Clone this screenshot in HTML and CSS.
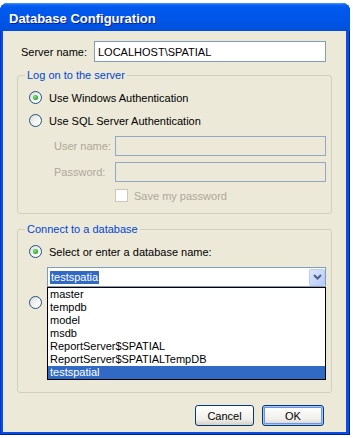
FILE: index.html
```html
<!DOCTYPE html>
<html lang="en">
<head>
  <meta charset="UTF-8" />
  <title>Database Configuration</title>
  <link rel="stylesheet" href="styles.css">
</head>
<body>
<div class="window">
  <div class="titlebar">Database Configuration</div>
  <div class="client">
    <div class="server-row">
      <label class="server-label">Server name:</label>
      <div class="textbox server-box">LOCALHOST\SPATIAL</div>
    </div>

    <div class="group group--logon">
      <span class="group__title">Log on to the server</span>
      <div class="radio-row radio-row--first">
        <span class="radio radio--checked"></span>
        <span>Use Windows Authentication</span>
      </div>
      <div class="radio-row">
        <span class="radio"></span>
        <span>Use SQL Server Authentication</span>
      </div>
      <div class="field-row field-row--first">
        <label class="field-label">User name:</label>
        <div class="textbox textbox--disabled field-box"></div>
      </div>
      <div class="field-row">
        <label class="field-label">Password:</label>
        <div class="textbox textbox--disabled field-box"></div>
      </div>
      <div class="check-row">
        <span class="checkbox"></span>
        <span>Save my password</span>
      </div>
    </div>

    <div class="group group--db">
      <span class="group__title">Connect to a database</span>
      <div class="radio-row radio-row--first">
        <span class="radio radio--checked"></span>
        <span>Select or enter a database name:</span>
      </div>
      <div class="combo">
        <span class="combo__text">testspatia</span>
        <span class="combo__btn">
          <svg width="9" height="6" viewBox="0 0 9 6"><path d="M1 1 L4.5 4.5 L8 1" fill="none" stroke="#4d6185" stroke-width="2"/></svg>
        </span>
        <ul class="combo__list">
          <li>master</li>
          <li>tempdb</li>
          <li>model</li>
          <li>msdb</li>
          <li>ReportServer$SPATIAL</li>
          <li>ReportServer$SPATIALTempDB</li>
          <li class="is-selected">testspatial</li>
        </ul>
      </div>
      <div class="radio-row radio-row--attach">
        <span class="radio"></span>
      </div>
    </div>

    <div class="buttons">
      <button class="btn btn--cancel">Cancel</button>
      <button class="btn btn--ok">OK</button>
    </div>
  </div>
</div>
</body>
</html>
```

FILE: styles.css
```css
* {
  box-sizing: border-box;
}
body {
  margin: 0;
  background: #fff;
  font-family: "Liberation Sans", Arial, sans-serif;
  font-size: 11px;
  color: #000;
  white-space: nowrap;
}
.window {
  width: 350px;
  margin-top: 3px;
  background: #0a4ee0;
  border-radius: 8px 8px 0 0;
  overflow: hidden;
  box-shadow: inset -1px 0 0 #001ea0, inset 1px 0 0 #0831d9, inset 0 -1px 0 #001ea0;
}
.titlebar {
  height: 28px;
  padding: 2px 0 0 9px;
  display: flex;
  align-items: center;
  color: #fff;
  font-weight: bold;
  font-size: 13px;
  text-shadow: 1px 1px 0 #0f1e8a;
  background: linear-gradient(#4a9cff 0, #0b61f2 2px, #0058ee 5px, #0056e8 60%, #004fdc 100%);
}
.client {
  margin: 0 4px 3px 3px;
  height: 401px;
  background: #ece9d8;
  padding-top: 10px;
}
.server-row {
  display: flex;
  align-items: center;
  padding-left: 18px;
}
.server-label {
  width: 73px;
}
.textbox {
  height: 21px;
  border: 1px solid #7f9db9;
  background: #fff;
  padding: 0 3px;
  display: flex;
  align-items: center;
}
.server-box {
  width: 232px;
}
.textbox--disabled {
  background: #ece9d8;
  border-color: #93a8c4;
}
.group {
  margin-left: 14px;
  width: 315px;
  border: 1px solid #d0d0bf;
  border-radius: 3px;
  padding: 0 0 0 11px;
}
.group--logon {
  margin-top: 13px;
  height: 139px;
}
.group--db {
  margin-top: 15px;
  height: 164px;
}
.group__title {
  display: block;
  width: max-content;
  margin: -7px 0 0 -4px;
  padding: 0 2px;
  line-height: 13px;
  height: 13px;
  background: #ece9d8;
  color: #0046d5;
}
.radio-row {
  display: flex;
  align-items: center;
  gap: 7px;
  height: 13px;
  margin-top: 10px;
}
.radio-row--first {
  margin-top: 9px;
}
.radio-row--attach {
  margin-top: 9px;
}
.radio {
  width: 13px;
  height: 13px;
  border-radius: 50%;
  border: 1px solid #1c5180;
  background: linear-gradient(135deg, #dcdcd7, #fff 80%);
  display: flex;
  align-items: center;
  justify-content: center;
  flex: none;
}
.radio--checked::after {
  content: "";
  width: 5px;
  height: 5px;
  border-radius: 50%;
  background: radial-gradient(circle at 40% 40%, #8ae88a, #21a121 70%);
}
.field-row {
  display: flex;
  align-items: center;
  padding-left: 25px;
  margin-top: 6px;
  color: #aca899;
}
.field-row--first {
  margin-top: 9px;
}
.field-label {
  width: 61px;
}
.field-box {
  width: 211px;
  height: 20px;
}
.check-row {
  display: flex;
  align-items: center;
  gap: 6px;
  margin: 7px 0 0 86px;
  height: 13px;
  color: #aca899;
}
.checkbox {
  width: 13px;
  height: 13px;
  border: 1px solid #cac8bb;
  background: #fff;
}
.combo {
  position: relative;
  margin: 9px 0 0 18px;
  width: 279px;
  height: 20px;
  border: 1px solid #7f9db9;
  background: #fff;
  display: flex;
  align-items: center;
  padding-left: 2px;
}
.combo__text {
  background: #316ac5;
  color: #fff;
  padding: 0 1px;
  line-height: 13px;
}
.combo__btn {
  margin-left: auto;
  width: 16px;
  height: 17px;
  border: 1px solid #b9cbf3;
  border-radius: 2px;
  background: linear-gradient(135deg, #dde7fd, #b6cbfa);
  display: flex;
  align-items: center;
  justify-content: center;
}
.combo__list {
  position: absolute;
  top: 19px;
  left: -1px;
  width: 279px;
  margin: 0;
  padding: 0;
  list-style: none;
  border: 1px solid #000;
  background: #fff;
  z-index: 2;
}
.combo__list li {
  height: 13px;
  line-height: 13px;
  padding-left: 2px;
}
.combo__list .is-selected {
  background: #316ac5;
  color: #fff;
}
.buttons {
  display: flex;
  justify-content: flex-end;
  gap: 8px;
  padding-right: 22px;
  margin-top: 12px;
}
.btn {
  height: 21px;
  border: 1px solid #003c74;
  border-radius: 3px;
  background: linear-gradient(#fff, #f0efea 70%, #d6d0c5);
  font-family: inherit;
  font-size: 11px;
  color: #000;
  padding: 0;
}
.btn--cancel {
  width: 59px;
}
.btn--ok {
  width: 62px;
  box-shadow: inset 0 0 0 1px #aac5f5, inset 0 0 0 2px #6b95e8;
}
```
